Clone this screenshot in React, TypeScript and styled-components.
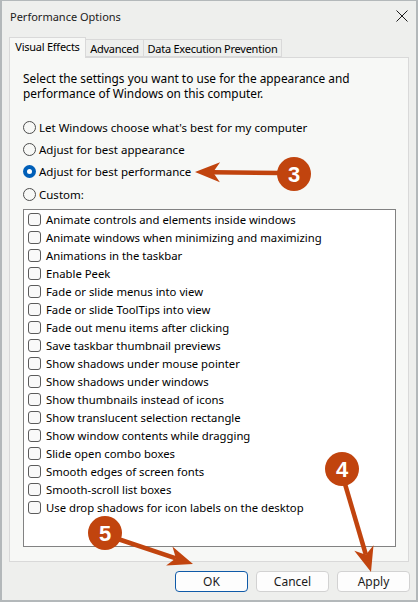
import React from "react";
import styled, { createGlobalStyle } from "styled-components";

const Global = createGlobalStyle`
  html, body { margin: 0; padding: 0; background: #eeefed; }
  body { font-family: "Noto Sans", "Open Sans", sans-serif; font-size: 12px; color: #000; }
  * { box-sizing: border-box; }
`;

const Win = styled.div`
  position: relative;
  width: 418px;
  height: 602px;
  border: 2px solid #b3b8ba;
  border-top-width: 1px;
  background: #eeefed;
  display: flex;
  flex-direction: column;
  overflow: hidden;
`;

const TitleBar = styled.div`
  height: 29px;
  display: flex;
  align-items: center;
  justify-content: space-between;
  padding: 0 8px 0 8px;
`;

const Title = styled.div`
  font-size: 11px;
  color: #1b1b1b;
  padding-top: 1px;
`;

const CloseIcon = styled.svg`
  width: 12px;
  height: 12px;
`;

const TabStrip = styled.div`
  display: flex;
  align-items: flex-end;
  padding-left: 7px;
  height: 27px;
  position: relative;
  z-index: 1;
`;

const Tab = styled.div<{ $active?: boolean; $w: number }>`
  width: ${(p) => p.$w}px;
  height: ${(p) => (p.$active ? "21px" : "18px")};
  display: flex;
  align-items: center;
  justify-content: center;
  font-size: 11px;
  letter-spacing: -0.25px;
  border: 1px solid #d9d9d9;
  border-bottom: ${(p) => (p.$active ? "none" : "1px solid #d9d9d9")};
  margin-left: ${(p) => (p.$active ? "0" : "-1px")};
  background: ${(p) => (p.$active ? "#f7f8f6" : "#eeefed")};
  margin-bottom: ${(p) => (p.$active ? "-1px" : "0")};
  padding-bottom: ${(p) => (p.$active ? "3px" : "0")};
  white-space: nowrap;
`;

const Panel = styled.div`
  margin: 0 7px;
  height: 505px;
  background: #f7f8f6;
  border: 1px solid #d9d9d9;
  padding: 13px 13px 0 13px;
  display: flex;
  flex-direction: column;
  font-size: 11.5px;
`;

const Intro = styled.p`
  margin: 0;
  line-height: 15px;
  width: 360px;
  font-size: 11.85px;
`;

const Radios = styled.div`
  display: flex;
  flex-direction: column;
  margin-top: 15px;
`;

const RadioRow = styled.label`
  display: flex;
  align-items: center;
  height: 22.3px;
  gap: 3px;
`;

const RadioCircle = styled.span<{ $checked?: boolean }>`
  width: 13px;
  height: 13px;
  border-radius: 50%;
  flex: none;
  border: ${(p) => (p.$checked ? "none" : "1px solid #4d4d4d")};
  background: ${(p) => (p.$checked ? "#005fb8" : "#f7f8f6")};
  display: flex;
  align-items: center;
  justify-content: center;
  &::after {
    content: "";
    width: 5px;
    height: 5px;
    border-radius: 50%;
    background: #fff;
    display: ${(p) => (p.$checked ? "block" : "none")};
  }
`;

const ListBox = styled.div`
  margin-top: 4px;
  width: 373px;
  height: 338px;
  background: #fff;
  border: 1px solid #828282;
  padding: 0 0 0 4px;
  display: flex;
  flex-direction: column;
  font-size: 11.3px;
`;

const CheckRow = styled.label`
  height: 18px;
  flex: none;
  display: flex;
  align-items: center;
  gap: 5px;
  white-space: nowrap;
`;

const CheckBox = styled.span`
  width: 13px;
  height: 13px;
  flex: none;
  border: 1px solid #5c5c5c;
  border-radius: 3px;
  background: #f9f9f9;
`;

const Buttons = styled.div`
  display: flex;
  justify-content: flex-end;
  gap: 8px;
  padding: 9px 6px 0 0;
`;

const Button = styled.button<{ $default?: boolean }>`
  width: 73px;
  height: 21px;
  font: inherit;
  font-size: 12px;
  color: #1b1b1b;
  background: #fdfdfd;
  border: 1px solid ${(p) => (p.$default ? "#0f5aa8" : "#d2d2d2")};
  border-radius: 4px;
  padding: 0;
`;

const Overlay = styled.svg`
  position: absolute;
  left: -2px;
  top: -1px;
  width: 418px;
  height: 602px;
  pointer-events: none;
`;

const items = [
  "Animate controls and elements inside windows",
  "Animate windows when minimizing and maximizing",
  "Animations in the taskbar",
  "Enable Peek",
  "Fade or slide menus into view",
  "Fade or slide ToolTips into view",
  "Fade out menu items after clicking",
  "Save taskbar thumbnail previews",
  "Show shadows under mouse pointer",
  "Show shadows under windows",
  "Show thumbnails instead of icons",
  "Show translucent selection rectangle",
  "Show window contents while dragging",
  "Slide open combo boxes",
  "Smooth edges of screen fonts",
  "Smooth-scroll list boxes",
  "Use drop shadows for icon labels on the desktop",
];

const radios = [
  { label: "Let Windows choose what's best for my computer", checked: false },
  { label: "Adjust for best appearance", checked: false },
  { label: "Adjust for best performance", checked: true },
  { label: "Custom:", checked: false },
];

const tabs = [
  { label: "Visual Effects", w: 77, active: true },
  { label: "Advanced", w: 59, active: false },
  { label: "Data Execution Prevention", w: 139, active: false },
];

const ORANGE = "#c1440e";

function Badge({ cx, cy, n }: { cx: number; cy: number; n: string }) {
  return (
    <g>
      <circle cx={cx} cy={cy} r={17} fill={ORANGE} />
      <text
        x={cx}
        y={cy + 7.5}
        textAnchor="middle"
        fontFamily="'Liberation Sans', Arial, sans-serif"
        fontWeight="bold"
        fontSize="22"
        fill="#fff"
      >
        {n}
      </text>
    </g>
  );
}

function Arrow({ x1, y1, x2, y2 }: { x1: number; y1: number; x2: number; y2: number }) {
  const dx = x2 - x1;
  const dy = y2 - y1;
  const len = Math.hypot(dx, dy);
  const ux = dx / len;
  const uy = dy / len;
  const px = -uy;
  const py = ux;
  const bx = x2 - ux * 25;
  const by = y2 - uy * 25;
  const nx = x2 - ux * 18;
  const ny = y2 - uy * 18;
  const pts = [
    [x2, y2],
    [bx + px * 10, by + py * 10],
    [nx, ny],
    [bx - px * 10, by - py * 10],
  ]
    .map((p) => p.join(","))
    .join(" ");
  return (
    <g>
      <line x1={x1} y1={y1} x2={nx} y2={ny} stroke={ORANGE} strokeWidth={4.5} />
      <polygon points={pts} fill={ORANGE} />
    </g>
  );
}

export default function App() {
  return (
    <>
      <Global />
      <Win>
        <TitleBar>
          <Title>Performance Options</Title>
          <CloseIcon viewBox="0 0 12 12">
            <path d="M0.5 0.5 L11.5 11.5 M11.5 0.5 L0.5 11.5" stroke="#1b1b1b" strokeWidth="1" fill="none" />
          </CloseIcon>
        </TitleBar>
        <TabStrip>
          {tabs.map((t) => (
            <Tab key={t.label} $active={t.active} $w={t.w}>
              {t.label}
            </Tab>
          ))}
        </TabStrip>
        <Panel>
          <Intro>
            Select the settings you want to use for the appearance and performance of Windows on this computer.
          </Intro>
          <Radios>
            {radios.map((r) => (
              <RadioRow key={r.label}>
                <RadioCircle $checked={r.checked} />
                {r.label}
              </RadioRow>
            ))}
          </Radios>
          <ListBox>
            {items.map((t) => (
              <CheckRow key={t}>
                <CheckBox />
                {t}
              </CheckRow>
            ))}
          </ListBox>
        </Panel>
        <Buttons>
          <Button $default>OK</Button>
          <Button>Cancel</Button>
          <Button>Apply</Button>
        </Buttons>
        <Overlay viewBox="0 0 418 602">
          <Arrow x1={280} y1={173} x2={195} y2={172} />
          <Badge cx={294} cy={174} n="3" />
          <Arrow x1={345} y1={484} x2={371} y2={572} />
          <Badge cx={342} cy={469} n="4" />
          <Arrow x1={118} y1={539} x2={193} y2={564} />
          <Badge cx={105} cy={533} n="5" />
        </Overlay>
      </Win>
    </>
  );
}
